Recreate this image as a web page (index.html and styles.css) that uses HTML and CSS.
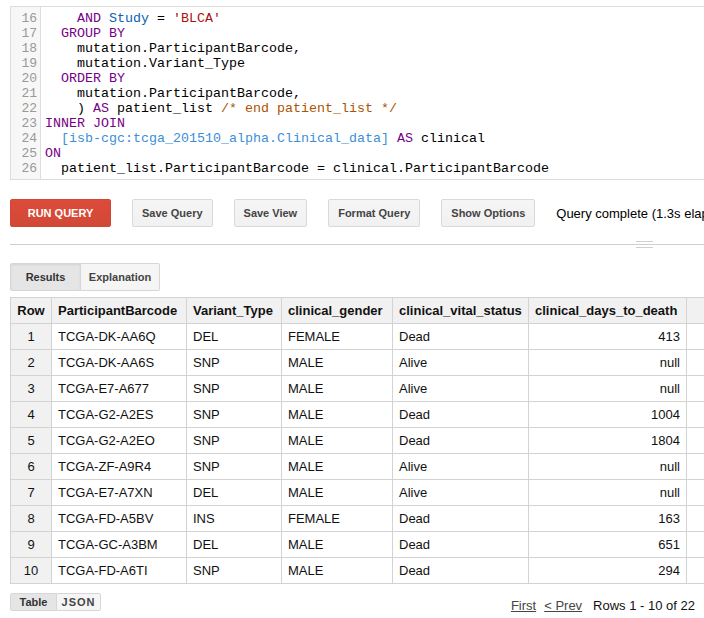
FILE: index.html
```html
<!DOCTYPE html>
<html>
<head>
<meta charset="utf-8">
<link rel="stylesheet" href="styles.css">
</head>
<body>
<div class="page">
  <div class="editor">
    <div class="gutter">
      <div>16</div><div>17</div><div>18</div><div>19</div><div>20</div><div>21</div><div>22</div><div>23</div><div>24</div><div>25</div><div>26</div>
    </div>
    <div class="code"><div class="ln">    <span class="kw">AND</span> <span class="var">Study</span> = <span class="str">'BLCA'</span></div><div class="ln">  <span class="kw">GROUP BY</span></div><div class="ln">    mutation.ParticipantBarcode,</div><div class="ln">    mutation.Variant_Type</div><div class="ln">  <span class="kw">ORDER BY</span></div><div class="ln">    mutation.ParticipantBarcode,</div><div class="ln">    ) <span class="kw">AS</span> patient_list <span class="cm">/* end patient_list */</span></div><div class="ln"><span class="kw">INNER JOIN</span></div><div class="ln">  <span class="tbl">[isb-cgc:tcga_201510_alpha.Clinical_data]</span> <span class="kw">AS</span> clinical</div><div class="ln"><span class="kw">ON</span></div><div class="ln">  patient_list.ParticipantBarcode = clinical.ParticipantBarcode</div></div>
  </div>

  <div class="toolbar">
    <button class="btn btn-run">RUN QUERY</button>
    <button class="btn">Save Query</button>
    <button class="btn">Save View</button>
    <button class="btn">Format Query</button>
    <button class="btn">Show Options</button>
    <span class="status">Query complete (1.3s elapsed, 1.91 MB processed)</span>
  </div>

  <div class="divider"><span class="grip"></span></div>

  <div class="tabs">
    <span class="tab tab-active">Results</span><span class="tab">Explanation</span>
  </div>

  <table class="results">
    <colgroup>
      <col class="c-row"><col class="c-bar"><col class="c-var"><col class="c-gen"><col class="c-vit"><col class="c-days"><col class="c-extra">
    </colgroup>
    <thead>
      <tr><th class="num">Row</th><th>ParticipantBarcode</th><th>Variant_Type</th><th>clinical_gender</th><th>clinical_vital_status</th><th>clinical_days_to_death</th><th></th></tr>
    </thead>
    <tbody>
      <tr><td class="num">1</td><td>TCGA-DK-AA6Q</td><td>DEL</td><td>FEMALE</td><td>Dead</td><td class="right">413</td><td></td></tr>
      <tr><td class="num">2</td><td>TCGA-DK-AA6S</td><td>SNP</td><td>MALE</td><td>Alive</td><td class="right">null</td><td></td></tr>
      <tr><td class="num">3</td><td>TCGA-E7-A677</td><td>SNP</td><td>MALE</td><td>Alive</td><td class="right">null</td><td></td></tr>
      <tr><td class="num">4</td><td>TCGA-G2-A2ES</td><td>SNP</td><td>MALE</td><td>Dead</td><td class="right">1004</td><td></td></tr>
      <tr><td class="num">5</td><td>TCGA-G2-A2EO</td><td>SNP</td><td>MALE</td><td>Dead</td><td class="right">1804</td><td></td></tr>
      <tr><td class="num">6</td><td>TCGA-ZF-A9R4</td><td>SNP</td><td>MALE</td><td>Alive</td><td class="right">null</td><td></td></tr>
      <tr><td class="num">7</td><td>TCGA-E7-A7XN</td><td>DEL</td><td>MALE</td><td>Alive</td><td class="right">null</td><td></td></tr>
      <tr><td class="num">8</td><td>TCGA-FD-A5BV</td><td>INS</td><td>FEMALE</td><td>Dead</td><td class="right">163</td><td></td></tr>
      <tr><td class="num">9</td><td>TCGA-GC-A3BM</td><td>DEL</td><td>MALE</td><td>Dead</td><td class="right">651</td><td></td></tr>
      <tr><td class="num">10</td><td>TCGA-FD-A6TI</td><td>SNP</td><td>MALE</td><td>Dead</td><td class="right">294</td><td></td></tr>
    </tbody>
  </table>

  <div class="footer">
    <div class="toggle">
      <span class="tgl tgl-active">Table</span><span class="tgl">JSON</span>
    </div>
    <div class="pager">
      <a class="plink">First</a>
      <a class="plink">&lt; Prev</a>
      <span class="prange">Rows 1 - 10 of 22</span>
    </div>
  </div>
</div>
</body>
</html>
```

FILE: styles.css
```css
html, body {
  margin: 0;
  padding: 0;
  background: #fff;
  overflow: hidden;
}
body {
  width: 704px;
  height: 618px;
  font-family: "Liberation Sans", Arial, sans-serif;
  color: #222;
}
.page {
  padding: 6px 0 0 10px;
  width: 800px;
}

/* editor */
.editor {
  display: flex;
  border-top: 1px solid #dcdcdc;
  border-bottom: 1px solid #dcdcdc;
  border-left: 1px solid #dcdcdc;
  width: 760px;
  height: 172px;
  box-sizing: content-box;
  overflow: hidden;
}
.gutter {
  flex-shrink: 0;
  width: 26px;
  background: #f7f7f7;
  border-right: 1px solid #dddddd;
  padding: 4px 3px 0 0;
  text-align: right;
  font-family: "Liberation Mono", "Courier New", monospace;
  font-size: 13px;
  line-height: 15px;
  color: #999;
}
.code {
  padding: 4px 0 0 4px;
  font-family: "Liberation Mono", "Courier New", monospace;
  font-size: 13.33px;
  line-height: 15px;
  color: #000;
}
.ln {
  white-space: pre;
  height: 15px;
}
.kw { color: #770088; }
.var { color: #0a5fb4; }
.str { color: #aa1111; }
.cm { color: #aa5500; }
.tbl { color: #3b8fd6; }

/* toolbar */
.toolbar {
  display: flex;
  align-items: center;
  margin-top: 19px;
  height: 28px;
  white-space: nowrap;
}
.btn {
  flex-shrink: 0;
  height: 28px;
  padding: 0 9px;
  margin: 0 21px 0 0;
  border: 1px solid #d9d9d9;
  border-radius: 2px;
  background: linear-gradient(#f5f5f5, #f1f1f1);
  color: #444;
  font-family: "Liberation Sans", Arial, sans-serif;
  font-weight: bold;
  font-size: 11px;
  box-sizing: border-box;
}
.btn-run {
  width: 101px;
  background: linear-gradient(#dd4b39, #d14836);
  border: 1px solid #d0463a;
  color: #fff;
}
.status {
  flex-shrink: 0;
  font-size: 13px;
  color: #000;
}

/* divider */
.divider {
  position: relative;
  margin-top: 17px;
  height: 1px;
  background: #cfcfcf;
  width: 694px;
}
.grip {
  position: absolute;
  left: 626px;
  top: -3px;
  width: 17px;
  height: 7px;
  border-top: 1px solid #cfcfcf;
  border-bottom: 1px solid #cfcfcf;
  box-sizing: border-box;
}

/* tabs */
.tabs {
  display: flex;
  margin-top: 18px;
  height: 28px;
}
.tab {
  display: flex;
  align-items: center;
  justify-content: center;
  height: 28px;
  box-sizing: border-box;
  border: 1px solid #d6d6d6;
  background: #f5f5f5;
  color: #444;
  font-size: 11px;
  font-weight: bold;
  padding: 0 8px;
}
.tab:first-child {
  border-radius: 2px 0 0 2px;
  width: 71px;
}
.tab:last-child {
  border-left: none;
  border-radius: 0 2px 2px 0;
  width: 79px;
}
.tab-active {
  background: #e5e5e5;
  box-shadow: inset 0 1px 2px rgba(0,0,0,0.08);
  color: #333;
}

/* table */
.results {
  margin-top: 6px;
  border-collapse: collapse;
  table-layout: fixed;
  width: 737px;
  font-size: 13px;
}
.c-row { width: 41px; }
.c-bar { width: 135px; }
.c-var { width: 95px; }
.c-gen { width: 111px; }
.c-vit { width: 136px; }
.c-days { width: 158px; }
.c-extra { width: 60px; }
.results th,
.results td {
  border: 1px solid #d3d3d3;
  height: 25px;
  padding: 0 6px;
  text-align: left;
  white-space: nowrap;
  overflow: hidden;
  color: #111;
}
.results th {
  background: #f1f1f1;
  font-weight: bold;
}
.results td.num,
.results th.num {
  background: #f1f1f1;
  text-align: center;
}
.results td.right {
  text-align: right;
}

/* footer */
.footer {
  display: flex;
  justify-content: space-between;
  align-items: center;
  width: 685px;
  margin-top: 7px;
}
.toggle {
  display: flex;
  height: 18px;
}
.tgl {
  display: flex;
  align-items: center;
  justify-content: center;
  box-sizing: border-box;
  height: 18px;
  border: 1px solid #d6d6d6;
  background: #f5f5f5;
  color: #444;
  font-size: 11px;
  font-weight: bold;
}
.tgl:first-child {
  width: 47px;
  border-radius: 2px 0 0 2px;
}
.tgl:last-child {
  width: 44px;
  border-left: none;
  border-radius: 0 2px 2px 0;
  letter-spacing: 1px;
}
.tgl-active {
  background: #e5e5e5;
  color: #333;
}
.pager {
  display: flex;
  align-items: center;
  font-size: 13px;
  padding-top: 7px;
}
.plink {
  color: #444;
  text-decoration: underline;
  margin-right: 8px;
}
.prange {
  color: #111;
  margin-left: 3px;
}
```
